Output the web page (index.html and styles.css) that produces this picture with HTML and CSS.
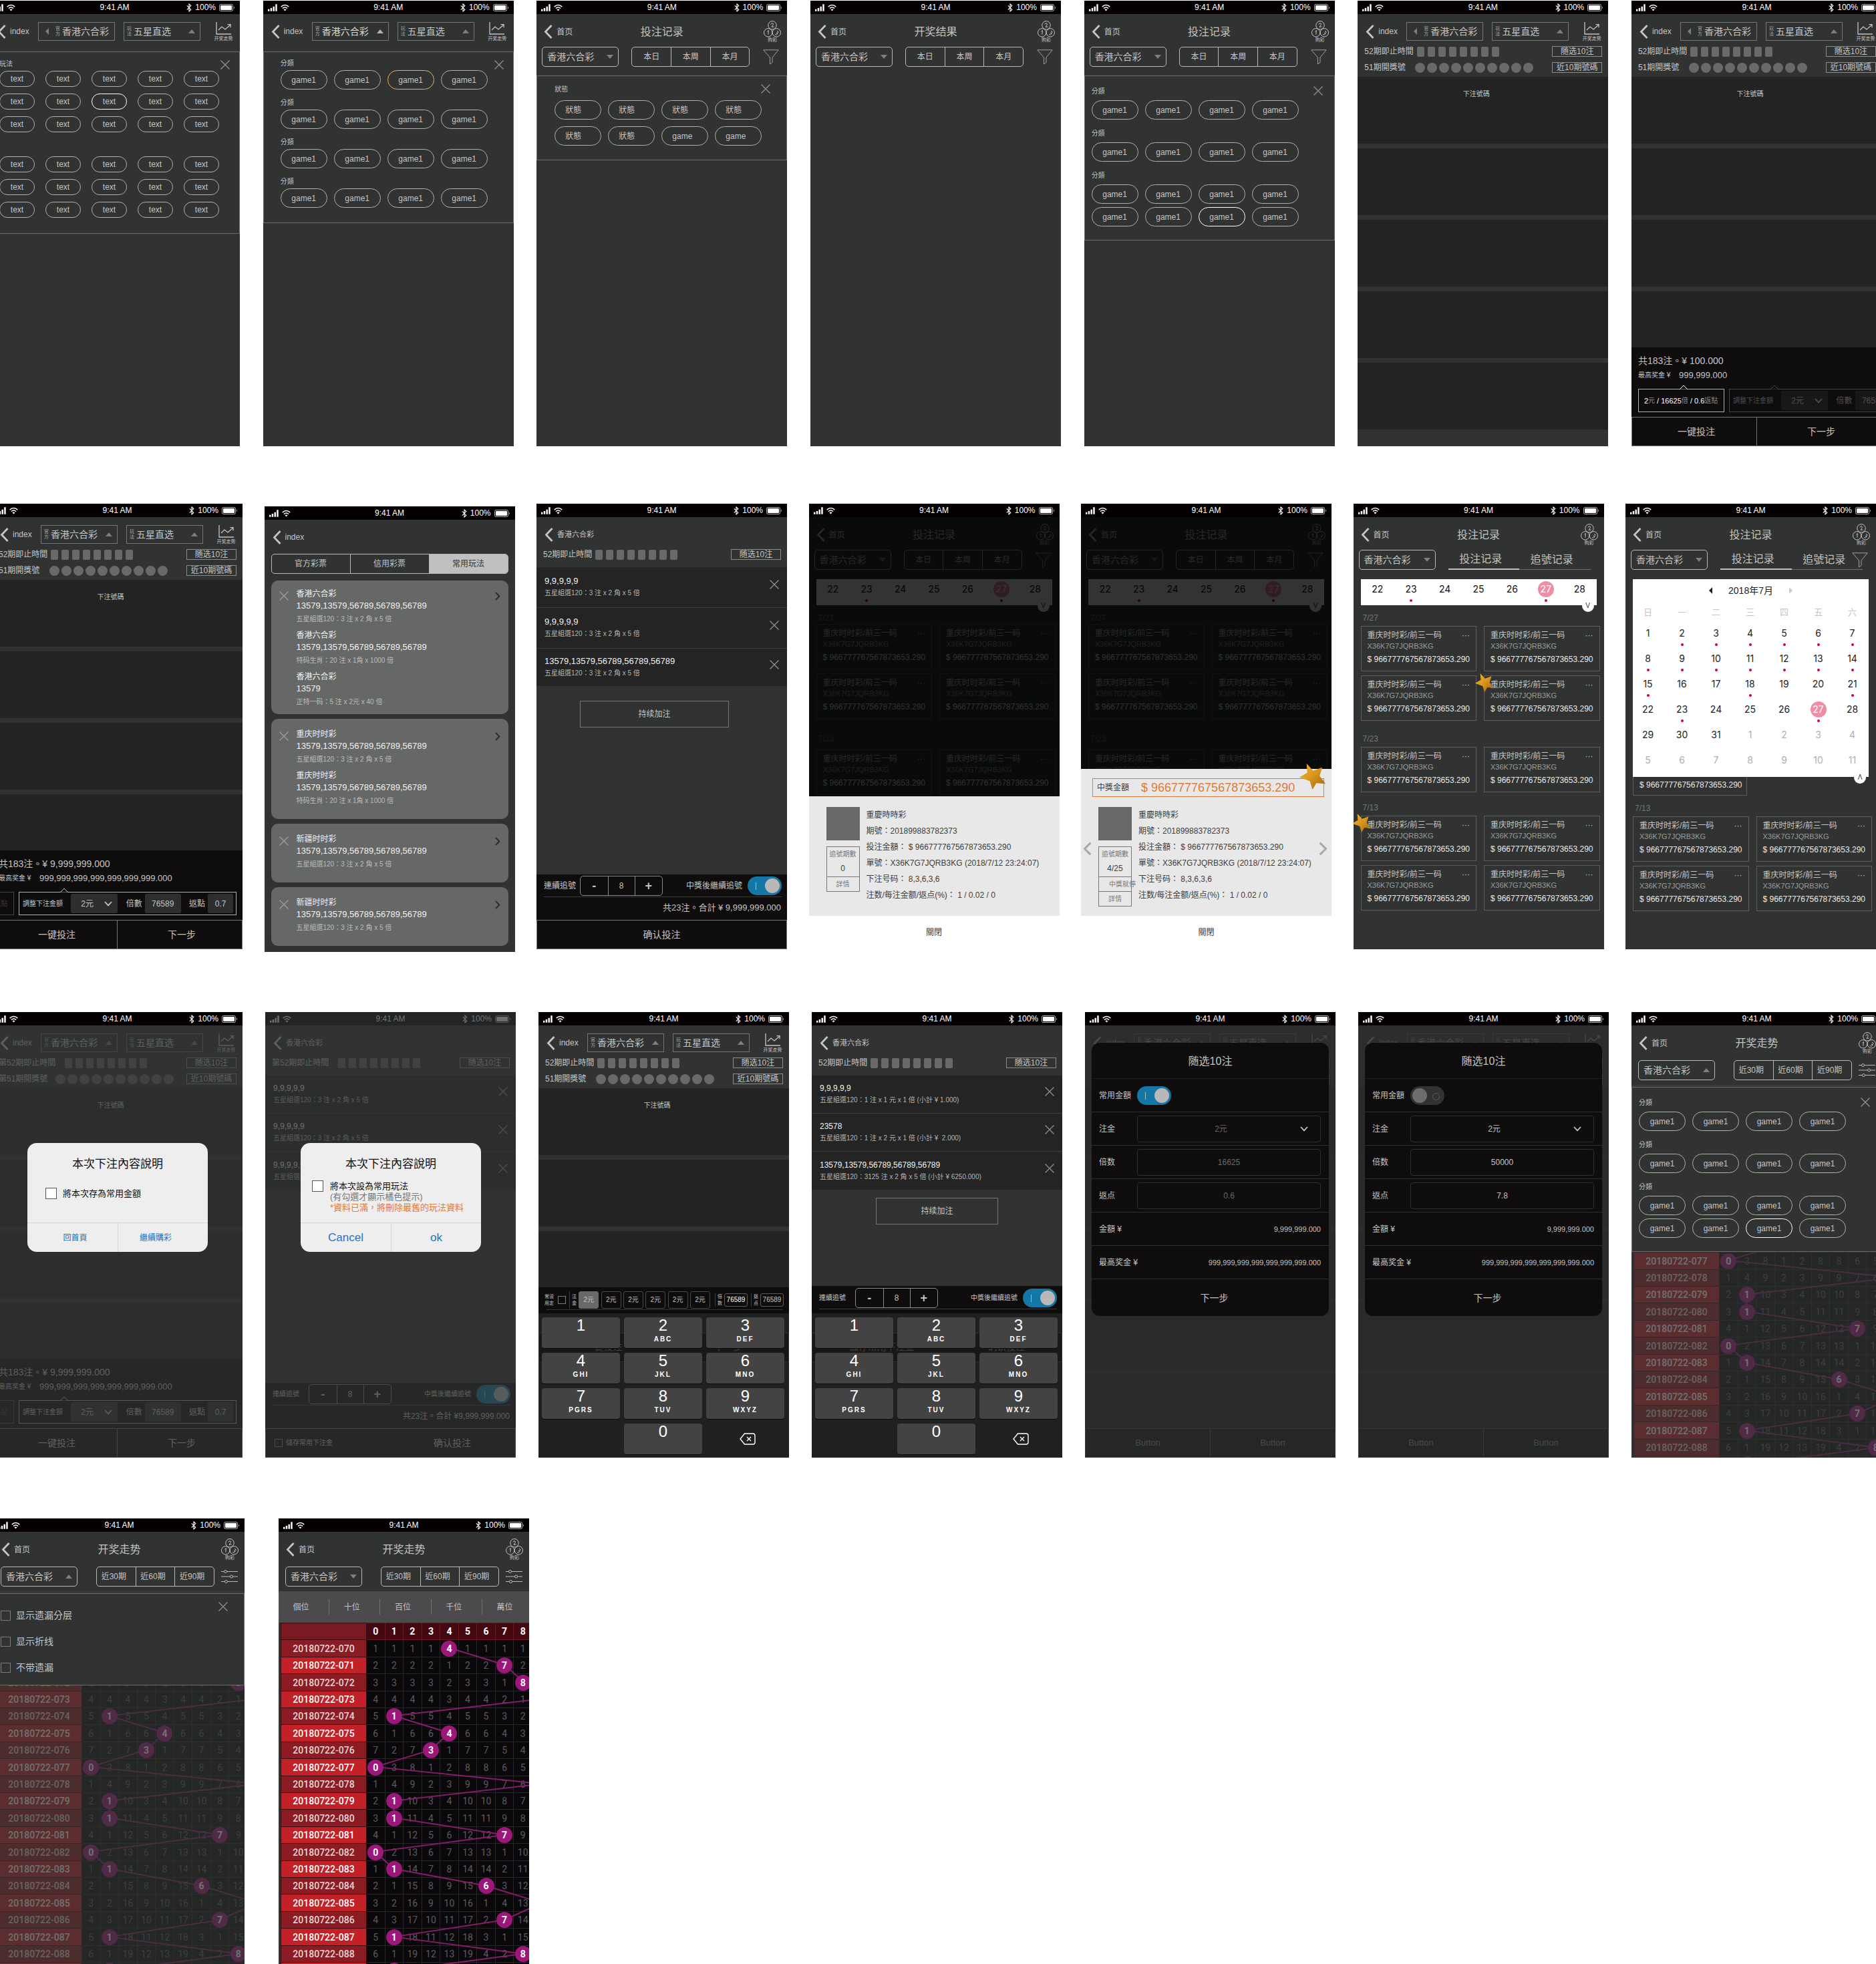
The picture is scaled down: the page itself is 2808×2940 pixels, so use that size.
FILE: index.html
```html
<!DOCTYPE html>
<html lang="zh-Hant">
<head>
<meta charset="utf-8">
<meta name="viewport" content="width=device-width, initial-scale=1">
<title>投注 App 畫面總覽</title>
<link rel="stylesheet" href="styles.css">
<script src="script.js" defer></script>
</head>
<body>
<svg class="sprite" aria-hidden="true">
  <defs><linearGradient id="gold" x1="0" y1="0" x2="1" y2="1"><stop offset="0" stop-color="#f2b632"/><stop offset=".5" stop-color="#d8951c"/><stop offset="1" stop-color="#9c6410"/></linearGradient></defs>
  <symbol id="i-signal" viewBox="0 0 16 11"><path fill="currentColor" d="M0 8h2.6v3H0zM4 6h2.6v5H4zM8 3.5h2.6V11H8zM12 0h2.6v11H12z"/></symbol>
  <symbol id="i-wifi" viewBox="0 0 14 11"><g fill="none" stroke="currentColor" stroke-width="1.7"><path d="M.8 4Q7-1.6 13.2 4"/><path d="M3.2 6.6q3.8-3.2 7.6 0"/></g><path fill="currentColor" d="M4.8 8.4q2.2-1.7 4.4 0L7 11z"/></symbol>
  <symbol id="i-bt" viewBox="0 0 8 13"><path fill="none" stroke="currentColor" stroke-width="1.1" d="M.8 3.4l6 6L4 12V1l2.8 2.6-6 6"/></symbol>
  <symbol id="i-battery" viewBox="0 0 24 11"><rect x=".5" y=".5" width="20" height="10" rx="2" fill="none" stroke="currentColor" stroke-opacity=".7"/><rect x="2" y="2" width="17" height="7" rx="1" fill="currentColor"/><path fill="currentColor" fill-opacity=".7" d="M22 3.5q2 2 0 4z"/></symbol>
  <symbol id="i-back" viewBox="0 0 13 21"><path fill="none" stroke="currentColor" stroke-width="2.8" d="M11.5 1L2.5 10.5l9 9.5"/></symbol>
  <symbol id="i-next" viewBox="0 0 8 13"><path fill="none" stroke="currentColor" stroke-width="1.8" d="M1 1l5.5 5.5L1 12"/></symbol>
  <symbol id="i-down" viewBox="0 0 12 8"><path fill="none" stroke="currentColor" stroke-width="1.8" d="M1 1l5 5.4L11 1"/></symbol>
  <symbol id="i-x" viewBox="0 0 14 14"><path fill="none" stroke="currentColor" stroke-width="1.4" d="M.5.5l13 13M13.5.5l-13 13"/></symbol>
  <symbol id="i-trend" viewBox="0 0 24 19"><g fill="none" stroke="currentColor" stroke-width="1.3"><path d="M1 0v18h22"/><path d="M4 12l5-5 5 4 8-7"/><path d="M17.5 3.6H22v4.6"/></g></symbol>
  <symbol id="i-balls" viewBox="0 0 26 25"><g fill="none" stroke="currentColor"><circle cx="13" cy="6.8" r="6.2"/><circle cx="6.7" cy="17.8" r="6.2"/><circle cx="19.3" cy="17.8" r="6.2"/></g><g fill="none" stroke="currentColor"><path d="M10.800 5.500q1.200-2.400 3-1.500 1.600 1.200-.4 3.200l-1.400 2.200 3.600-.4"/><path d="M5.400 16.200l2-1.600-.6 6"/><path d="M17.200 20.600q2.800 1 3.400-.6.200-1.400-1.400-1.600 2.600.6 2.800-1.200 0-1.600-2-1.600"/></g></symbol>
  <symbol id="i-filter" viewBox="0 0 24 23"><path fill="none" stroke="currentColor" d="M.8.8h22.4L14 12v7.5L10.500 22V12z"/></symbol>
  <symbol id="i-sliders" viewBox="0 0 25 20"><g fill="none" stroke="currentColor"><path d="M0 2.5h4.5M8.5 2.5H25M0 10h13.5M17.5 10H25M0 17.5h5.5M9.5 17.5H25"/><circle cx="6.5" cy="2.5" r="2"/><circle cx="15.5" cy="10" r="2"/><circle cx="7.5" cy="17.5" r="2"/></g></symbol>
  <symbol id="i-erase" viewBox="0 0 24 18"><g fill="none" stroke="currentColor" stroke-width="1.4"><path d="M7.500 1H20q3 0 3 3v10q0 3-3 3H7.500L1 9z"/><path d="M11 6l6 6M17 6l-6 6"/></g></symbol>
  <symbol id="i-star" viewBox="0 0 40 40"><path fill="url(#gold)" d="M11 0l10 11 14-5-4 13 9 12-14-1-6 10-4-13L0 21l12-7z"/></symbol>
  <symbol id="i-notch" viewBox="0 0 12 7"><path fill="#0e0c0d" stroke="currentColor" d="M.5 6.5L6 1l5.500 5.500"/></symbol>
</svg>

<main class="canvas">
  <div class="row row--1">
    <section class="phone">
      <header class="status" data-part="status"></header>
      <nav class="nav nav--play" data-part="play" data-arrow></nav>
      <div class="panel panel--text">
        <button class="close" aria-label="關閉"><svg><use href="#i-x"/></svg></button>
        <div class="group"><span>玩法</span><div class="pills" data-pills="text,15" data-on="7"></div></div>
        <div class="group"><div class="pills" data-pills="text,15"></div></div>
      </div>
    </section>

    <section class="phone">
      <header class="status" data-part="status"></header>
      <nav class="nav nav--play nav--open" data-part="play"></nav>
      <div class="panel panel--game">
        <button class="close" aria-label="關閉"><svg><use href="#i-x"/></svg></button>
        <div class="group gold"><span>分類</span><div class="pills" data-pills="game1,4" data-on="2"></div></div>
        <div class="group"><span>分類</span><div class="pills" data-pills="game1,4"></div></div>
        <div class="group"><span>分類</span><div class="pills" data-pills="game1,4"></div></div>
        <div class="group"><span>分類</span><div class="pills" data-pills="game1,4"></div></div>
      </div>
    </section>

    <section class="phone">
      <header class="status" data-part="status"></header>
      <nav class="nav nav--title" data-part="title" data-title="投注记录"></nav>
      <div class="tools" data-part="tools"></div>
      <div class="panel panel--state">
        <button class="close" aria-label="關閉"><svg><use href="#i-x"/></svg></button>
        <div class="group"><span>狀態</span>
          <div class="pills"><button>狀態</button><button>狀態</button><button>狀態</button><button>狀態</button><button>狀態</button><button>狀態</button><button>game</button><button>game</button></div>
        </div>
      </div>
    </section>

    <section class="phone">
      <header class="status" data-part="status"></header>
      <nav class="nav nav--title" data-part="title" data-title="开奖结果"></nav>
      <div class="tools" data-part="tools"></div>
    </section>

    <section class="phone">
      <header class="status" data-part="status"></header>
      <nav class="nav nav--title" data-part="title" data-title="投注记录"></nav>
      <div class="tools" data-part="tools"></div>
      <div class="panel panel--lottery">
        <button class="close" aria-label="關閉"><svg><use href="#i-x"/></svg></button>
        <div class="group"><span>分類</span><div class="pills" data-pills="game1,4"></div></div>
        <div class="group"><span>分類</span><div class="pills" data-pills="game1,4"></div></div>
        <div class="group"><span>分類</span><div class="pills" data-pills="game1,8" data-on="6"></div></div>
      </div>
    </section>

    <section class="phone">
      <header class="status" data-part="status"></header>
      <nav class="nav nav--play" data-part="play" data-arrow></nav>
      <div class="draw" data-part="draw"></div>
      <div class="slots" data-part="slots"></div>
    </section>

    <section class="phone">
      <header class="status" data-part="status"></header>
      <nav class="nav nav--play" data-part="play" data-arrow></nav>
      <div class="draw" data-part="draw"></div>
      <div class="slots" data-part="slots"></div>
      <footer class="bet bet--first" data-part="bet" data-total="100.000" data-prize="999,999.000"></footer>
    </section>
  </div>

  <div class="row row--2">
    <section class="phone">
      <header class="status" data-part="status"></header>
      <nav class="nav nav--play" data-part="play"></nav>
      <div class="draw" data-part="draw"></div>
      <div class="slots" data-part="slots"></div>
      <footer class="bet bet--second" data-part="bet" data-total="9,999,999.000" data-prize="999,999,999,999,999,999,999.000"></footer>
    </section>

    <section class="phone phone--lower">
      <header class="status" data-part="status"></header>
      <nav class="nav"><a class="back" href="#"><svg><use href="#i-back"/></svg>index</a></nav>
      <div class="seg seg--wide"><button>官方彩票</button><button>信用彩票</button><button class="on">常用玩法</button></div>
      <div class="favs">
        <article class="fav fav--tight">
          <button aria-label="刪除"><svg class="x"><use href="#i-x"/></svg></button>
          <div>
            <h3>香港六合彩</h3><p>13579,13579,56789,56789,56789</p><small>五星組選120：3 注 x 2 角 x 5 倍</small>
            <h3>香港六合彩</h3><p>13579,13579,56789,56789,56789</p><small>特码生肖：20 注 x 1角 x 1000 倍</small>
            <h3>香港六合彩</h3><p>13579</p><small>正特一码：5 注 x 2元 x 40 倍</small>
          </div>
          <a href="#" aria-label="下注"><svg class="next"><use href="#i-next"/></svg></a>
        </article>
        <article class="fav">
          <button aria-label="刪除"><svg class="x"><use href="#i-x"/></svg></button>
          <div>
            <h3>重庆时时彩</h3><p>13579,13579,56789,56789,56789</p><small>五星組選120：3 注 x 2 角 x 5 倍</small>
            <h3>重庆时时彩</h3><p>13579,13579,56789,56789,56789</p><small>特码生肖：20 注 x 1角 x 1000 倍</small>
          </div>
          <a href="#" aria-label="下注"><svg class="next"><use href="#i-next"/></svg></a>
        </article>
        <article class="fav">
          <button aria-label="刪除"><svg class="x"><use href="#i-x"/></svg></button>
          <div><h3>新疆时时彩</h3><p>13579,13579,56789,56789,56789</p><small>五星組選120：3 注 x 2 角 x 5 倍</small></div>
          <a href="#" aria-label="下注"><svg class="next"><use href="#i-next"/></svg></a>
        </article>
        <article class="fav">
          <button aria-label="刪除"><svg class="x"><use href="#i-x"/></svg></button>
          <div><h3>新疆时时彩</h3><p>13579,13579,56789,56789,56789</p><small>五星組選120：3 注 x 2 角 x 5 倍</small></div>
          <a href="#" aria-label="下注"><svg class="next"><use href="#i-next"/></svg></a>
        </article>
      </div>
    </section>

    <section class="phone">
      <header class="status" data-part="status"></header>
      <nav class="nav"><a class="back back--name" href="#"><svg><use href="#i-back"/></svg>香港六合彩</a></nav>
      <div class="draw draw--one" data-part="draw" data-single></div>
      <ul class="list list--tall">
        <li><div><p>9,9,9,9,9</p><small>五星組選120：3 注 x 2 角 x 5 倍</small></div><button aria-label="刪除"><svg class="x"><use href="#i-x"/></svg></button></li>
        <li><div><p>9,9,9,9,9</p><small>五星組選120：3 注 x 2 角 x 5 倍</small></div><button aria-label="刪除"><svg class="x"><use href="#i-x"/></svg></button></li>
        <li><div><p>13579,13579,56789,56789,56789</p><small>五星組選120：3 注 x 2 角 x 5 倍</small></div><button aria-label="刪除"><svg class="x"><use href="#i-x"/></svg></button></li>
      </ul>
      <button class="more more--wide">持续加注</button>
      <footer class="order">
        <div class="chase" data-part="chase"></div>
        <p class="sum">共23注。合計 ¥ 9,999,999.000</p>
        <div class="actions"><button>确认投注</button></div>
      </footer>
    </section>

    <section class="phone">
      <header class="status" data-part="status"></header>
      <nav class="nav nav--title" data-part="title" data-title="投注记录"></nav>
      <div class="tools" data-part="tools"></div>
      <div class="history history--under" data-part="history" data-groups="7/27:4,7/23:2"></div>
      <div class="shade shade--black"></div>
      <div class="sheet" role="dialog" aria-label="注單詳情">
        <div class="detail">
          <div class="side">
            <div class="thumb"></div>
            <div class="times"><span>追號期數</span><b>0</b><a href="#">詳情</a></div>
          </div>
          <div class="facts"><p>重慶時時彩</p><p>期號：201899883782373</p><p>投注金額： $ 966777767567873653.290</p><p>單號：X36K7G7JQRB3KG (2018/7/12 23:24:07)</p><p>下注号码： 8,3,6,3,6</p><p>注数/每注金额/返点(%)： 1 / 0.02 / 0</p></div>
        </div>
        <button class="dismiss">關閉</button>
      </div>
    </section>

    <section class="phone">
      <header class="status" data-part="status"></header>
      <nav class="nav nav--title" data-part="title" data-title="投注记录"></nav>
      <div class="tools" data-part="tools"></div>
      <div class="history history--under" data-part="history" data-groups="7/27:4,7/23:2"></div>
      <div class="shade shade--black"></div>
      <div class="sheet" role="dialog" aria-label="中獎詳情">
        <div class="detail detail--win">
          <div class="prize"><span>中獎金額</span><strong>$ 966777767567873653.290</strong><svg class="star"><use href="#i-star"/></svg></div>
          <button class="turn turn--prev" aria-label="上一筆"><svg><use href="#i-next"/></svg></button>
          <div class="side">
            <div class="thumb"></div>
            <div class="times"><span>追號期數</span><b>4/25</b><em>中獎就停</em><a href="#">詳情</a></div>
          </div>
          <div class="facts"><p>重慶時時彩</p><p>期號：201899883782373</p><p>投注金額： $ 966777767567873653.290</p><p>單號：X36K7G7JQRB3KG (2018/7/12 23:24:07)</p><p>下注号码： 8,3,6,3,6</p><p>注数/每注金额/返点(%)： 1 / 0.02 / 0</p></div>
          <button class="turn turn--next" aria-label="下一筆"><svg><use href="#i-next"/></svg></button>
        </div>
        <button class="dismiss">關閉</button>
      </div>
    </section>

    <section class="phone">
      <header class="status" data-part="status"></header>
      <nav class="nav nav--title" data-part="title" data-title="投注记录"></nav>
      <div class="tools" data-part="tools" data-kind="tabs"></div>
      <div class="history" data-part="history" data-days data-groups="7/27:4,7/23:2,7/13:4" data-stars="3,6"></div>
    </section>

    <section class="phone">
      <header class="status" data-part="status"></header>
      <nav class="nav nav--title" data-part="title" data-title="投注记录"></nav>
      <div class="tools" data-part="tools" data-kind="tabs" data-filter></div>
      <div class="calendar">
        <div class="month"><button class="tri tri--left" aria-label="上個月"></button><span>2018年7月</span><button class="tri tri--right" aria-label="下個月"></button></div>
        <table data-part="month"></table>
        <button class="pull">Λ</button>
      </div>
      <div class="peek"><b>$ 966777767567873653.290</b></div>
      <div class="history history--rest" data-part="history" data-groups="7/13:4"></div>
    </section>
  </div>

  <div class="row row--3">
    <section class="phone">
      <header class="status" data-part="status"></header>
      <nav class="nav nav--play" data-part="play"></nav>
      <div class="draw draw--long" data-part="draw" data-prefix="第"></div>
      <div class="slots" data-part="slots"></div>
      <footer class="bet bet--second" data-part="bet" data-total="9,999,999.000" data-prize="999,999,999,999,999,999,999.000"></footer>
      <div class="shade"></div>
      <div class="alert" role="dialog" aria-label="本次下注內容說明">
        <h2>本次下注內容說明</h2>
        <label class="ask"><input type="checkbox"><span>將本次存為常用金額</span></label>
        <div class="choices"><button>回首頁</button><button>繼續購彩</button></div>
      </div>
    </section>

    <section class="phone">
      <header class="status" data-part="status"></header>
      <nav class="nav"><a class="back back--name" href="#"><svg><use href="#i-back"/></svg>香港六合彩</a></nav>
      <div class="draw draw--one draw--long" data-part="draw" data-prefix="第" data-single></div>
      <ul class="list">
        <li><div><p>9,9,9,9,9</p><small>五星組選120：3 注 x 2 角 x 5 倍</small></div><button aria-label="刪除"><svg class="x"><use href="#i-x"/></svg></button></li>
        <li><div><p>9,9,9,9,9</p><small>五星組選120：3 注 x 2 角 x 5 倍</small></div><button aria-label="刪除"><svg class="x"><use href="#i-x"/></svg></button></li>
        <li><div><p>9,9,9,9,9</p><small>五星組選120：3 注 x 2 角 x 5 倍</small></div><button aria-label="刪除"><svg class="x"><use href="#i-x"/></svg></button></li>
      </ul>
      <footer class="order order--small">
        <div class="chase" data-part="chase"></div>
        <p class="sum">共23注。合計 ¥9,999,999.000</p>
        <div class="actions actions--save"><label><input type="checkbox">儲存常用下注金</label><button>确认投注</button></div>
      </footer>
      <div class="shade shade--full"></div>
      <div class="alert alert--rich" role="dialog" aria-label="本次下注內容說明">
        <h2>本次下注內容說明</h2>
        <label class="ask"><input type="checkbox"><span>將本次設為常用玩法<small>(有勾選才顯示橘色提示)</small><strong>*資料已滿，將刪除最舊的玩法資料</strong></span></label>
        <div class="choices choices--latin"><button>Cancel</button><button>ok</button></div>
      </div>
    </section>

    <section class="phone">
      <header class="status" data-part="status"></header>
      <nav class="nav nav--play" data-part="play"></nav>
      <div class="draw" data-part="draw"></div>
      <div class="slots" data-part="slots"></div>
      <div class="quick">
        <label class="mini mini--two"><span>常设用定</span><input type="checkbox"></label>
        <div class="chips"><span>注金</span><button class="on">2元</button><button>2元</button><button>2元</button><button>2元</button><button>2元</button><button>2元</button></div>
        <label class="mini"><span>倍数</span><input class="lit" value="76589"></label>
        <label class="mini"><span>返点</span><input value="76589"></label>
      </div>
      <div class="keypad" data-part="keypad" data-ghost="一键投注,下一步"></div>
    </section>

    <section class="phone">
      <header class="status" data-part="status"></header>
      <nav class="nav"><a class="back back--name" href="#"><svg><use href="#i-back"/></svg>香港六合彩</a></nav>
      <div class="draw draw--one" data-part="draw" data-single></div>
      <ul class="list">
        <li><div><p>9,9,9,9,9</p><small>五星組選120：1 注 x 1 元 x 1 倍 (小計 ¥ 1.000)</small></div><button aria-label="刪除"><svg class="x"><use href="#i-x"/></svg></button></li>
        <li><div><p>23578</p><small>五星組選120：1 注 x 2 元 x 1 倍 (小計 ¥&nbsp; 2.000)</small></div><button aria-label="刪除"><svg class="x"><use href="#i-x"/></svg></button></li>
        <li><div><p>13579,13579,56789,56789,56789</p><small>五星組選120：3125 注 x 2 角 x 5 倍 (小計 ¥ 6250.000)</small></div><button aria-label="刪除"><svg class="x"><use href="#i-x"/></svg></button></li>
      </ul>
      <button class="more">持续加注</button>
      <footer class="order order--small order--keys">
        <div class="chase" data-part="chase"></div>
      </footer>
      <div class="keypad" data-part="keypad" data-ghost="儲存常用下注金,确认投注"></div>
    </section>

    <section class="phone">
      <header class="status" data-part="status"></header>
      <nav class="nav nav--play" data-part="play"></nav>
      <div class="draw" data-part="draw"></div>
      <div class="slots" data-part="slots"></div>
      <div class="actions actions--plain"><button>Button</button><button>Button</button></div>
      <div class="shade shade--deep"></div>
      <form class="modal">
        <h2>随选10注</h2>
        <label><span>常用金額</span><input type="checkbox" role="switch" checked></label>
        <label><span>注金</span><select disabled><option>2元</option></select><svg class="down"><use href="#i-down"/></svg></label>
        <label><span>倍数</span><input value="16625" disabled></label>
        <label><span>返点</span><input value="0.6" disabled></label>
        <p><span>金額 ¥</span><b>9,999,999.000</b></p>
        <p><span>最高奖金 ¥</span><b>999,999,999,999,999,999,999.000</b></p>
        <button type="button">下一步</button>
      </form>
    </section>

    <section class="phone">
      <header class="status" data-part="status"></header>
      <nav class="nav nav--play" data-part="play"></nav>
      <div class="draw" data-part="draw"></div>
      <div class="slots" data-part="slots"></div>
      <div class="actions actions--plain"><button>Button</button><button>Button</button></div>
      <div class="shade shade--deep"></div>
      <form class="modal">
        <h2>随选10注</h2>
        <label><span>常用金額</span><input type="checkbox" role="switch"></label>
        <label><span>注金</span><select><option>2元</option></select><svg class="down"><use href="#i-down"/></svg></label>
        <label><span>倍数</span><input value="50000"></label>
        <label><span>返点</span><input value="7.8"></label>
        <p><span>金額 ¥</span><b>9,999,999.000</b></p>
        <p><span>最高奖金 ¥</span><b>999,999,999,999,999,999,999.000</b></p>
        <button type="button">下一步</button>
      </form>
    </section>

    <section class="phone">
      <header class="status" data-part="status"></header>
      <nav class="nav nav--title" data-part="title" data-title="开奖走势"></nav>
      <div class="tools tools--trend" data-part="tools" data-kind="trend" data-up></div>
      <div class="trend trend--dim" data-part="trend"></div>
      <div class="panel panel--lottery panel--over">
        <button class="close" aria-label="關閉"><svg><use href="#i-x"/></svg></button>
        <div class="group"><span>分類</span><div class="pills" data-pills="game1,4"></div></div>
        <div class="group"><span>分類</span><div class="pills" data-pills="game1,4"></div></div>
        <div class="group"><span>分類</span><div class="pills" data-pills="game1,8" data-on="6"></div></div>
      </div>
    </section>
  </div>

  <div class="row row--4">
    <section class="phone">
      <header class="status" data-part="status"></header>
      <nav class="nav nav--title" data-part="title" data-title="开奖走势"></nav>
      <div class="tools tools--trend" data-part="tools" data-kind="trend" data-up></div>
      <div class="trend trend--dim" data-part="trend"></div>
      <div class="panel panel--checks panel--over">
        <button class="close" aria-label="關閉"><svg><use href="#i-x"/></svg></button>
        <label><input type="checkbox">显示遗漏分层</label>
        <label><input type="checkbox">显示折线</label>
        <label><input type="checkbox">不带遗漏</label>
      </div>
    </section>

    <section class="phone">
      <header class="status" data-part="status"></header>
      <nav class="nav nav--title" data-part="title" data-title="开奖走势"></nav>
      <div class="tools tools--trend" data-part="tools" data-kind="trend"></div>
      <div class="trend" data-part="trend"></div>
    </section>
  </div>
</main>
</body>
</html>
```
FILE: styles.css
```css
* { box-sizing: border-box; }
body {
  margin: 0;
  background: #fff;
  font-family: "Liberation Sans", "Noto Sans CJK TC", sans-serif;
  font-size: 12px;
  line-height: 16px;
  color: #c4c4c4;
}
button, input, select { font: inherit; color: inherit; background: none; border: 0; padding: 0; margin: 0; border-radius: 0; }
select, input { appearance: none; min-width: 0; }
select:disabled, input:disabled { opacity: 1; }
a { color: inherit; text-decoration: none; }
p, h2, h3, ul { margin: 0; padding: 0; list-style: none; font-weight: normal; }
svg { display: block; flex: none; }
.sprite { position: absolute; width: 0; height: 0; }

/* canvas */
.canvas { overflow: hidden; padding-top: 1px; }
.row { display: flex; justify-content: space-between; align-items: flex-start; }
.row--1 { margin: 0 -9px 0 -16px; }
.row--2 { margin: 86px 0 0 -12px; }
.row--3 { margin: 94px -9px 0 -12px; }
.row--4 { margin: 91px 0 0 -9px; justify-content: flex-start; gap: 51px; }
.phone {
  position: relative;
  flex: none;
  display: flex;
  flex-direction: column;
  width: 375px;
  height: 667px;
  overflow: hidden;
  background: #313332;
  white-space: nowrap;
}
.phone--lower { margin: 4px 0 -4px; }

/* status bar */
.status { flex: none; display: flex; align-items: center; height: 20px; padding: 0 7px; background: #040001; color: #fff; }
.status > div { flex: 1; display: flex; align-items: center; gap: 4px; }
.status > div:last-child { justify-content: flex-end; gap: 5px; }
.status .sig { width: 15px; height: 11px; }
.status .wifi { width: 13px; height: 11px; }
.status .bt { width: 8px; height: 13px; }
.status .bat { width: 24px; height: 11px; }

/* navigation */
.nav { flex: none; display: flex; align-items: center; height: 48px; padding-top: 4px; }
.back { display: flex; align-items: center; gap: 6px; width: 73px; padding-left: 12px; }
.back svg { width: 13px; height: 21px; }
.back--name { width: auto; font-size: 11px; }
.pick { flex: none; display: flex; align-items: center; gap: 2px; width: 115px; height: 28px; padding: 0 7px 0 4px; border: 1px solid #747675; }
.pick + .pick { margin-left: 13px; }
.pick small { width: 8px; font-size: 7px; line-height: 8px; white-space: normal; color: #a2a4a3; }
.pick select { flex: 1; font-size: 14px; line-height: 20px; height: 20px; }
.tri { flex: none; width: 0; height: 0; border: 5px solid transparent; }
.tri--up { border-width: 0 5px 6px; border-bottom-color: #7d7f7e; }
.tri--down { border-width: 6px 5px 0; border-top-color: #7d7f7e; }
.pick .tri--left { border-width: 5px 5px 5px 0; border-right-color: #7d7f7e; margin: 0 8px 0 6px; }
.nav--open .pick:nth-of-type(1) { color: #dadada; }
.nav--open .pick:nth-of-type(1) .tri { border-bottom-color: #b4b4b4; }
.nav--play .to-trend { flex: 1; padding: 3px 0 0 10px; display: flex; flex-direction: column; align-items: center; font-size: 7px; line-height: 12px; }
.to-trend svg { width: 24px; height: 19px; }
.nav--title { display: grid; grid-template-columns: 1fr auto 1fr; height: 49px; }
.nav--title .back { width: auto; padding-left: 11px; }
.nav--title h2 { font-size: 16px; line-height: 24px; }
.nav--title .buy { justify-self: end; margin-right: 9px; display: flex; flex-direction: column; align-items: center; font-size: 7px; line-height: 8px; }
.buy svg { width: 26px; height: 25px; }

/* toolbars */
.tools { flex: none; display: flex; align-items: center; height: 30px; padding: 0 12px 0 8px; }
.tools .pick { width: 115px; height: 30px; padding: 0 7px; border-color: #b9b9b9; border-radius: 5px; }
.tools .seg { width: 177px; margin-left: 19px; }
.tools > svg { width: 24px; height: 23px; margin-left: auto; color: #9c9e9d; }
.tools--trend { padding: 0 10px; margin-top: 3px; }
.tools--trend .seg { margin-left: 28px; }
.tools--trend .seg button { padding-right: 7px; }
.tools--trend > svg { width: 25px; height: 20px; color: #b9b9b9; }
.seg { display: flex; height: 30px; border: 1px solid #b9b9b9; border-radius: 5px; overflow: hidden; }
.seg button { flex: 1; }
.seg button + button { border-left: 1px solid #b9b9b9; }
.seg .on { background: #c0c0c0; color: #333; }
.seg--wide { flex: none; margin: 3px 10px 0; }
.tabs { flex: none; display: flex; margin-left: 19px; width: 213px; height: 30px; font-size: 16px; border-bottom: 1px solid #6f7170; }
.tabs button { flex: 1; height: 30px; padding-right: 9px; }
.tabs button.on { border-bottom: 2px solid #c4c4c4; }
.tabs + svg { margin-left: -16px; }

/* filter panels */
.panel { position: relative; flex: none; display: flex; flex-direction: column; border: 1px solid #6b6d6c; background: #313332; }
.panel--over { position: absolute; z-index: 4; top: 112px; left: 0; right: 0; }
.close { position: absolute; top: 12px; right: 14px; width: 14px; height: 14px; color: #8c8e8d; }
.close svg, .x { width: 14px; height: 14px; }
.group { display: flex; flex-direction: column; gap: 4px; }
.group > span { font-size: 10px; line-height: 12px; }
.pills { display: grid; grid-template-columns: repeat(4, 70px); gap: 5px 10px; }
.pills button { height: 29px; border: 1px solid #aeb0af; border-radius: 15px; }
.pills .on { border-color: #fff; }
.gold .on { border-color: #e5b24a; }
.panel--text { margin-top: 8px; padding: 12px 0 23px 14px; gap: 36px; }
.panel--text .pills { grid-template-columns: repeat(5, 53px); gap: 10px 16px; }
.panel--text .pills button { height: 24px; border-radius: 12px; }
.panel--game { margin-top: 8px; padding: 11px 0 22px 25px; gap: 14px; }
.panel--state { margin-top: 13px; padding: 14px 0 21px 26px; }
.panel--state .group { gap: 10px; }
.panel--state .pills { gap: 10px; }
.panel--state .pills button { text-align: left; padding-left: 15px; }
.panel--state .close, .panel--checks .close { right: 24px; }
.panel--lottery { margin-top: 13px; padding: 17px 0 20px 10px; gap: 15px; }
.panel--lottery .group { gap: 7px; }
.panel--lottery .close { top: 15px; right: 17px; }
.panel--over { margin-top: 0; }
.panel--checks { padding: 21px 0 15px 9px; gap: 17px; font-size: 14px; }
.panel--checks label { display: flex; align-items: center; gap: 8px; height: 22px; }
[type="checkbox"] { flex: none; width: 15px; height: 15px; border: 1px solid #7a7c7b; }

/* draw info */
.draw { flex: none; display: grid; gap: 8px; padding: 0 9px 6px 10px; }
.draw--one { padding-bottom: 11px; }
.draw > div { display: flex; align-items: center; height: 16px; gap: 3px; }
.draw span { min-width: 73px; }
.draw--long > div { gap: 12px; }
.draw--long span { min-width: 0; }
.draw button { margin-left: auto; width: 75px; height: 16px; border: 1px solid #8a8c8b; line-height: 14px; }
.marks { display: flex; gap: 5px; padding-left: 2px; }
.marks i { width: 11px; height: 15px; border-radius: 2px; background: #686a69; }
.marks--round { gap: 3px; padding-left: 0; }
.marks--round i { width: 15px; border-radius: 50%; }

/* number area */
.slots { flex: 1; min-height: 0; overflow: hidden; display: flex; flex-direction: column; gap: 7px; }
.slots > div { flex: none; height: 100px; background: #232323; }
.slots > div:first-child { padding: 18px 20px 0 0; text-align: center; font-size: 10px; }

/* bet bar */
.bet { flex: none; height: 148px; padding-top: 9px; background: #0e0c0d; overflow: hidden; }
.bet p { height: 22px; padding-left: 10px; display: flex; align-items: center; font-size: 14px; }
.bet p + p { font-size: 13px; }
.bet p span { width: 61px; font-size: 10px; }
.track { display: flex; gap: 7px; padding: 9px 0 7px 10px; }
.bet--second .track { margin-left: -106px; }
.plan { position: relative; flex: none; display: flex; align-items: center; height: 35px; border: 1px solid #b0b0b0; }
.plan > .notch { position: absolute; left: 61px; top: -7px; width: 12px; height: 7px; }
.plan--saved { width: 129px; padding-left: 8px; color: #fff; font-size: 11px; }
.plan--saved small { color: #8c8c8c; font-size: 10px; }
.plan--set { width: 326px; padding: 0 4px 0 5px; justify-content: space-between; }
.plan--set > small { font-size: 10px; }
.plan--set label { display: flex; align-items: center; gap: 4px; }
.plan--set input, .plan--set .sel { height: 29px; background: #2d2f2e; border-radius: 2px; text-align: center; }
.plan--set .sel { display: flex; align-items: center; width: 70px; padding: 0 8px 0 15px; }
.plan--set select { flex: 1; }
.down { width: 12px; height: 8px; }
.plan--set .times-in { width: 54px; }
.plan--set .rate-in { width: 38px; }
.bet--first .plan--set, .bet--second .plan--saved { opacity: .35; }
.actions { display: flex; height: 44px; border: 1px solid #747675; background: #0e0c0d; font-size: 14px; }
.actions button { flex: 1; }
.actions button + button { border-left: 1px solid #747675; }
.bet .actions button { padding-left: 6px; }
.actions--plain { flex: none; font-size: 13px; }

/* favourites */
.favs { display: grid; gap: 7px; padding: 10px 10px 0; }
.fav { display: flex; align-items: flex-start; padding: 14px 12px 16px; border-radius: 10px; background: #666867; color: #f0f0f0; }
.fav--tight { padding: 11px 12px 7px; }
.fav div { flex: 1; padding-left: 12px; }
.fav h3 { font-size: 12px; line-height: 18px; }
.fav p { font-size: 13px; line-height: 18px; }
.fav small { display: block; font-size: 10px; line-height: 22px; color: #bcbcbc; }
.fav small + h3 { margin-top: 4px; }
.fav button { margin-top: 5px; color: #9a9a9a; }
.fav a { margin-top: 6px; color: #2b2b2b; }
.next { width: 8px; height: 13px; }

/* order list */
.list { flex: none; }
.list li { display: flex; align-items: center; justify-content: space-between; height: 57px; padding: 0 12px; background: #232423; border-bottom: 1px solid #3c3e3d; }
.list li:last-child { border: 0; }
.list p { line-height: 18px; color: #f0f0f0; }
.list small { display: block; font-size: 10px; line-height: 18px; color: #b4b4b4; }
.list button { color: #8c8e8d; margin-top: -8px; }
.list--tall li { height: 61px; }
.list--tall li:last-child { height: 56px; }
.list--tall p { font-size: 13px; }
.more { flex: none; width: 183px; height: 40px; margin: 12px auto 0; border: 1px solid #747675; }
.more--wide { width: 223px; margin: 22px 0 0 65px; }
.order { margin-top: auto; background: #0e0c0d; }
.chase { display: flex; align-items: center; height: 34px; margin: 0 8px 0 11px; border-bottom: 1px solid #3a3a3a; }
.chase > span { flex: none; width: 54px; }
.stepper { flex: none; display: flex; width: 124px; height: 30px; border: 1px solid #8a8a8a; border-radius: 5px; text-align: center; }
.stepper button { flex: 1; font-size: 18px; font-weight: bold; }
.stepper input { width: 41px; text-align: center; border: 1px solid #8a8a8a; border-width: 0 1px; }
.chase label { display: flex; align-items: center; gap: 8px; margin-left: auto; }
.order--small .chase { font-size: 10px; }
.order--small input { font-size: 12px; }
.order--keys { padding: 1px 0 6px; }
.sum { height: 34px; line-height: 32px; padding-right: 9px; text-align: right; font-size: 13px; }
.order--small .sum { font-size: 12px; }
.actions--save { align-items: center; justify-content: space-between; padding: 0 66px 0 13px; }
.actions--save label { display: flex; align-items: center; gap: 5px; font-size: 10px; }
.actions--save [type="checkbox"] { width: 12px; height: 12px; }
.actions--save button { flex: none; }
[role="switch"] { position: relative; width: 51px; height: 28px; border: 0; border-radius: 14px; background: #313332; }
[role="switch"]::before { content: ""; position: absolute; left: 3px; top: 3px; width: 22px; height: 22px; border-radius: 50%; background: #6c6e6d; }
[role="switch"]::after { content: ""; position: absolute; right: 7px; top: 10px; width: 9px; height: 9px; border: 1px solid #5a5c5b; border-radius: 50%; }
[role="switch"]:checked { background: #1577a5; }
[role="switch"]:checked::before { left: 26px; background: #b8b8b8; }
[role="switch"]:checked::after { left: 12px; top: 9px; width: 1px; height: 11px; border: 0; border-radius: 0; background: #b8b8b8; }

/* history */
.history { padding: 14px 11px 0; }
.days { position: relative; display: grid; grid-template-columns: repeat(7, 1fr); height: 39px; padding-top: 3px; background: #fff; color: #111; text-align: center; }
.day { display: block; width: 24px; height: 24px; margin: 0 auto; border-radius: 50%; font-family: Inter, "Liberation Sans", sans-serif; font-size: 14px; line-height: 24px; text-align: center; }
.today .day { background: #f08ca4; color: #fff; }
.dot::after { content: ""; display: block; width: 4px; height: 4px; margin: 3px auto 0; border-radius: 50%; background: #d8002f; }
.pull { position: absolute; right: 4px; bottom: -10px; width: 18px; height: 18px; border-radius: 50%; background: #fff; color: #333; font-size: 10px; line-height: 18px; }
.history h3 { margin-top: 11px; height: 16px; font-size: 12px; color: #747675; padding-left: 3px; }
.tickets { display: grid; grid-template-columns: 1fr 1fr; gap: 6px 11px; margin: 4px 0 0; }
.tickets + h3 { margin-top: 19px; }
.tickets + h3 ~ .tickets + h3 { margin-top: 15px; }
.ticket { position: relative; height: 68px; padding: 5px 9px 0; border: 1px solid #5b5d5c; }
.ticket p { display: flex; justify-content: space-between; line-height: 16px; }
.ticket small { display: block; font-size: 11px; line-height: 16px; color: #9a9c9b; }
.ticket b, .peek b { display: block; line-height: 24px; font-weight: normal; color: #e8e8e8; }
.history--under { flex: 1; min-height: 0; overflow: hidden; }
.history--under .tickets { margin-top: 1px; }
.history--under .tickets + h3 { margin-top: 22px; }
.history--under .tickets + h3 + .tickets { margin-top: 8px; }
.history--rest { padding-top: 0; }
.peek { flex: none; width: 171px; height: 28px; margin-left: 11px; padding-left: 9px; border: 1px solid #5b5d5c; border-top: 0; }
.ticket .star { position: absolute; left: -14px; top: -4px; width: 28px; height: 28px; }
.shade { position: absolute; inset: 20px 0 0; background: rgba(49, 51, 50, .7); }
.shade--full { top: 0; }
.shade--black { background: rgba(0, 0, 0, .8); }
.shade--deep { background: rgba(43, 45, 44, .82); }

/* calendar */
.calendar { position: relative; flex: none; margin: 14px 11px 0; background: #fff; color: #222; }
.month { display: flex; align-items: center; justify-content: center; height: 34px; gap: 24px; font-size: 14px; }
.month .tri { border-width: 5px; }
.month .tri--left { border-right-color: #222; border-left-width: 0; }
.month .tri--right { border-left-color: #ccc; border-right-width: 0; }
.calendar table { width: calc(100% + 4px); margin-left: -3px; border-collapse: collapse; table-layout: fixed; }
.calendar th { height: 34px; padding: 0; vertical-align: top; font-size: 13px; font-weight: normal; line-height: 31px; color: #c4c4c4; }
.calendar td { height: 38px; padding: 1px 0 0; vertical-align: top; }
.calendar .out { color: #b0b0b0; }

/* ticket sheet */
.sheet { position: relative; flex: none; background: #fff; color: #3e3e3e; }
.detail { position: relative; display: flex; gap: 10px; height: 179px; padding: 16px 0 0 26px; background: #e8e8e8; }
.detail--win { flex-wrap: wrap; height: 220px; padding-top: 14px; align-content: flex-start; column-gap: 10px; row-gap: 15px; }
.side { width: 50px; }
.thumb { height: 50px; background: #686a69; }
.times { margin-top: 9px; border: 1px solid #777; text-align: center; }
.times span { display: block; font-size: 10px; line-height: 22px; color: #777; }
.times b { display: block; height: 22px; line-height: 21px; font-weight: normal; }
.times a, .times em { display: block; border-top: 1px solid #777; font-size: 10px; line-height: 21px; font-style: normal; color: #777; }
.times em { padding-left: 15px; }
.facts p { line-height: 24px; height: 24px; }
.prize { position: relative; flex: none; display: flex; align-items: center; gap: 18px; width: 347px; height: 28px; margin-left: -9px; padding-left: 6px; border: 1px solid #e07a3c; }
.prize strong { font-size: 18px; font-weight: normal; color: #e07a3c; }
.prize .star { position: absolute; right: -3px; top: -23px; width: 39px; height: 39px; }
.turn { position: absolute; top: 109px; color: #a8a8a8; }
.turn svg { width: 13px; height: 21px; }
.turn--prev { left: 3px; transform: rotate(180deg); }
.turn--next { right: 6px; }
.dismiss { width: 100%; height: 50px; }

/* alert */
.alert { position: absolute; top: 196px; left: 53px; width: 270px; height: 163px; display: flex; flex-direction: column; border-radius: 14px; background: #eee; color: #111; font-size: 13px; }
.alert h2 { padding-top: 20px; font-size: 17px; line-height: 24px; text-align: center; }
.ask { display: flex; gap: 9px; padding: 23px 0 0 27px; line-height: 17px; }
.ask input { width: 17px; height: 17px; background: #fff; border-color: #555; }
.alert--rich .ask { padding: 12px 0 0 17px; gap: 10px; }
.ask small { display: block; font-size: 13px; line-height: 16px; color: #777; }
.ask strong { display: block; font-weight: normal; line-height: 16px; color: #e07a3c; }
.choices { display: flex; height: 44px; margin-top: auto; border-top: 1px solid #d4d4d4; color: #1d74c4; font-size: 12px; }
.choices button { width: 50%; padding-left: 8px; }
.choices button + button { border-left: 1px solid #d4d4d4; padding: 0 22px 0 0; }
.choices--latin { font-size: 17px; }
.choices--latin button, .choices--latin button + button { padding: 0; }

/* quick amounts and keypad */
.quick { position: relative; flex: none; display: flex; align-items: center; gap: 5px; height: 39px; padding: 0 8px 2px 9px; background: #0e0c0d; font-size: 10px; }
.quick::after { content: ""; position: absolute; left: 12px; right: 9px; bottom: 5px; height: 1px; background: #333; }
.mini, .chips { display: flex; align-items: center; gap: 3px; }
.quick span { width: 7px; font-size: 7px; line-height: 10px; white-space: normal; }
.quick .mini--two span { width: 14px; }
.mini--two { gap: 6px; }
.quick [type="checkbox"] { width: 12px; height: 12px; }
.chips, .chips ~ .mini { border-left: 1px solid #3a3a3a; padding-left: 3px; }
.chips { flex: 1; justify-content: space-between; gap: 0; padding-right: 2px; }
.chips button { width: 30px; height: 26px; border: 1px solid #4a4a4a; border-radius: 3px; }
.chips .on { background: #686a69; border-color: #686a69; }
.mini input:not([type]) { width: 35px; height: 20px; border: 1px solid #5a5a5a; border-radius: 3px; text-align: center; }
.mini .lit { color: #fff; border-color: #8a8a8a; }
.keypad { position: relative; flex: none; display: grid; grid-template-columns: repeat(3, 1fr); grid-auto-rows: 46px; gap: 7px 6px; padding: 6px 7px 5px 5px; background: #1f2120; }
.keypad button { position: relative; border-radius: 4px; background: #434343; box-shadow: 0 1px 0 #0c0c0c; color: #fff; font-size: 24px; line-height: 24px; display: flex; flex-direction: column; align-items: center; }
.keypad button small { font-size: 10px; font-weight: bold; line-height: 18px; letter-spacing: 2px; }
.keypad .erase { background: none; box-shadow: none; justify-content: center; align-items: center; padding-left: 7px; }
.erase svg { width: 24px; height: 18px; }
.keypad .zero { grid-column: 2; }
.ghost { position: absolute; left: 0; right: 0; top: 29px; display: flex; justify-content: space-around; height: 44px; border: 1px solid #2d2f2e; background: #181818; color: #3c3e3d; font-size: 14px; line-height: 40px; }

/* pick-for-me form */
.modal { position: absolute; top: 46px; left: 10px; right: 10px; border-radius: 12px; background: #0e0c0d; }
.modal h2 { height: 54px; font-size: 16px; line-height: 55px; text-align: center; border-bottom: 1px solid #1d1f1e; }
.modal label, .modal p { position: relative; display: flex; align-items: center; height: 50px; padding: 0 12px 0 11px; border-bottom: 1px solid #2d2f2e; }
.modal span { width: 57px; }
.modal input:not([type]), .modal select { flex: 1; height: 40px; border: 1px solid #2d2f2e; border-radius: 4px; text-align: center; text-align-last: center; }
.modal :disabled { color: #6a6a6a; }
.modal select { padding-right: 24px; }
.modal .down { position: absolute; right: 31px; top: 21px; }
.modal p { justify-content: space-between; }
.modal b { font-weight: normal; font-size: 11px; }
.modal > button { width: 100%; height: 55px; padding-left: 12px; font-size: 14px; }

/* trend */
.trend { flex: none; font-family: Roboto, "Noto Sans CJK TC", sans-serif; position: relative; padding-top: 7px; }
.places { display: flex; height: 47px; margin-right: -5px; background: #4c4a4c; font-size: 12px; }
.places span { flex: 1; margin: 12px 0; line-height: 24px; text-align: center; padding-right: 8px; }
.places span + span { border-left: 1px solid #747274; }
.plot { position: relative; width: 377px; margin-left: 3px; }
.plot table { width: 100%; table-layout: fixed; border-collapse: collapse; font-size: 14px; text-align: center; background: #0a080a; }
.plot thead tr { height: 25px; }
.plot tbody tr { height: 25px; }
.plot tbody tr:nth-child(5n + 1), .plot tbody tr:nth-child(5n + 3) { height: 26px; }
.plot th, .plot td { padding: 0; border: 1px solid #262626; }
.plot thead th { background: #450810; color: #fff; border-color: #6a1620; }
.plot th:first-child { width: 128px; border-color: #3a0a0e; font-weight: 500; background: #8c1c24; color: #e6d4d4; }
.plot thead th:first-child { background: #7a1921; }
.plot tbody tr:nth-child(even) th { background: #c12127; color: #fff; }
.plot td { color: #5c5c5c; }
.hit { position: relative; z-index: 2; display: block; width: 24px; height: 24px; margin: 0 auto; border-radius: 50%; background: #9b177a; color: #fff; font-weight: bold; line-height: 24px; }
.line { position: absolute; left: 128px; right: 0; top: 25px; bottom: 0; }
.line svg { width: 100%; height: 100%; overflow: visible; }
.line path { fill: none; stroke: #8a1b6c; stroke-width: 2; vector-effect: non-scaling-stroke; }
.trend--dim::after { content: ""; position: absolute; z-index: 3; inset: 0; background: rgba(49, 51, 50, .7); }
```
FILE: script.js
```js
const icon = (name, cls = '') => `<svg class="${cls}"><use href="#i-${name}"/></svg>`;
const times = (n, fn) => Array.from({ length: n }, (_, i) => fn(i)).join('');

const lotteryPick = (dir) => `<label class="pick"><select aria-label="彩種"><option>香港六合彩</option></select><i class="tri tri--${dir}"></i></label>`;
const seg = (labels) => `<div class="seg">${labels.map((l) => `<button>${l}</button>`).join('')}</div>`;

const ticket = (star) => `<article class="ticket"><p>重庆时时彩/前三一码<span>···</span></p><small>X36K7G7JQRB3KG</small><b>$ 966777767567873653.290</b>${star ? icon('star', 'star') : ''}</article>`;

/* winning digit of each issue, 20180722-070 onwards */
const draws = [4, 7, 8, 9, 1, 4, 3, 0, 9, 1, 1, 7, 0, 1, 6, 9, 7, 1, 8, 1];

const parts = {
  status: () => `<div>${icon('signal', 'sig')}${icon('wifi', 'wifi')}</div><span>9:41 AM</span><div>${icon('bt', 'bt')}<span>100%</span>${icon('battery', 'bat')}</div>`,

  play: (d) => `<a class="back" href="#">${icon('back')}index</a>
    <label class="pick">${'arrow' in d ? '<i class="tri tri--left"></i>' : ''}<small>官方</small><select aria-label="彩種"><option>香港六合彩</option></select>${'arrow' in d ? '' : '<i class="tri tri--up"></i>'}</label>
    <label class="pick"><small>玩法</small><select aria-label="玩法"><option>五星直选</option></select><i class="tri tri--up"></i></label>
    <a class="to-trend" href="#">${icon('trend')}开奖走势</a>`,

  title: (d) => `<a class="back" href="#">${icon('back')}首页</a><h2>${d.title}</h2><a class="buy" href="#">${icon('balls')}购彩</a>`,

  tools: (d) => {
    if (d.kind === 'trend') return lotteryPick('up' in d ? 'up' : 'down') + seg(['近30期', '近60期', '近90期']) + icon('sliders');
    if (d.kind === 'tabs') return `${lotteryPick('down')}<div class="tabs"><button class="on">投注记录</button><button>追號记录</button></div>${'filter' in d ? icon('filter') : ''}`;
    return lotteryPick('down') + seg(['本日', '本周', '本月']) + icon('filter');
  },

  draw: (d) => {
    const p = d.prefix || '';
    return `<div><span>${p}52期即止時間</span><div class="marks">${times(8, () => '<i></i>')}</div><button>随选10注</button></div>`
      + ('single' in d ? '' : `<div><span>${p}51期開獎號</span><div class="marks marks--round">${times(10, () => '<i></i>')}</div><button>近10期號碼</button></div>`);
  },

  slots: () => `<div>下注號碼</div>${times(4, () => '<div></div>')}`,

  bet: (d) => `<p>共183注。¥ ${d.total}</p><p><span>最高奖金 ¥</span>${d.prize}</p>
    <div class="track">
      <div class="plan plan--saved">${icon('notch', 'notch')}2<small>元</small>&nbsp;/ 16625<small>倍</small>&nbsp;/ 0.6<small>返點</small></div>
      <div class="plan plan--set">${icon('notch', 'notch')}<small>調整下注金額</small>
        <span class="sel"><select aria-label="金額"><option>2元</option></select>${icon('down', 'down')}</span>
        <label>倍數<input class="times-in" value="76589"></label>
        <label>返點<input class="rate-in" value="0.7"></label></div>
    </div>
    <div class="actions"><button>一键投注</button><button>下一步</button></div>`,

  chase: () => `<span>連續追號</span><div class="stepper"><button>-</button><input value="8" aria-label="期數"><button>+</button></div><label>中獎後繼續追號<input type="checkbox" role="switch" checked></label>`,

  history: (d) => {
    const stars = (d.stars || '').split(',').filter(Boolean).map(Number);
    let n = 0;
    const days = [22, 23, 24, 25, 26, 27, 28].map((v) => `<div class="${v === 27 ? 'today dot' : v === 23 ? 'dot' : ''}"><span class="day">${v}</span></div>`).join('');
    const strip = d.groups.startsWith('7/27') ? `<div class="days">${days}<button class="pull">V</button></div>` : '';
    return strip + d.groups.split(',').map((g) => {
      const [day, count] = g.split(':');
      return `<h3>${day}</h3><div class="tickets">${times(+count, () => ticket(stars.includes(n++)))}</div>`;
    }).join('');
  },

  month: () => {
    const marked = [2, 3, 4, 5, 6, 7, 8, 9, 10, 11, 12, 13, 14, 15, 18, 21, 23, 27];
    const cell = (i) => {
      const out = i > 31;
      const cls = [out && 'out', !out && marked.includes(i) && 'dot', i === 27 && 'today'].filter(Boolean).join(' ');
      return `<td class="${cls}"><span class="day">${out ? i - 31 : i}</span></td>`;
    };
    return `<thead><tr>${[...'日一二三四五六'].map((w) => `<th>${w}</th>`).join('')}</tr></thead><tbody>${times(6, (r) => `<tr>${times(7, (c) => cell(r * 7 + c + 1))}</tr>`)}</tbody>`;
  },

  keypad: (d) => {
    const letters = ['', 'ABC', 'DEF', 'GHI', 'JKL', 'MNO', 'PGRS', 'TUV', 'WXYZ'];
    return `<div class="ghost">${d.ghost.split(',').map((t) => `<span>${t}</span>`).join('')}</div>`
      + letters.map((l, i) => `<button>${i + 1}<small>${l}</small></button>`).join('')
      + `<button class="zero">0</button><button class="erase" aria-label="刪除">${icon('erase')}</button>`;
  },

  trend: () => {
    const miss = Array(9).fill(0);
    const rows = draws.map((hit, r) => `<tr><th>20180722-0${70 + r}</th>${miss.map((_, c) => {
      miss[c] = c === hit ? 0 : miss[c] + 1;
      return `<td>${c === hit ? `<span class="hit">${c}</span>` : miss[c]}</td>`;
    }).join('')}</tr>`).join('');
    const path = draws.map((hit, r) => `${r ? 'L' : 'M'}${hit + 0.5} ${r + 0.5}`).join('');
    return `<div class="places">${['個位', '十位', '百位', '千位', '萬位'].map((p) => `<span>${p}</span>`).join('')}</div>
      <div class="plot"><table><thead><tr><th></th>${times(9, (i) => `<th>${i}</th>`)}</tr></thead><tbody>${rows}</tbody></table>
      <div class="line"><svg viewBox="0 0 9 20" preserveAspectRatio="none"><path d="${path}"/></svg></div></div>`;
  },
};

document.querySelectorAll('[data-part]').forEach((el) => {
  el.innerHTML = parts[el.dataset.part](el.dataset);
});

document.querySelectorAll('[data-pills]').forEach((el) => {
  const [label, count] = el.dataset.pills.split(',');
  el.innerHTML = times(+count, (i) => `<button class="${String(i) === el.dataset.on ? 'on' : ''}">${label}</button>`);
});
```
